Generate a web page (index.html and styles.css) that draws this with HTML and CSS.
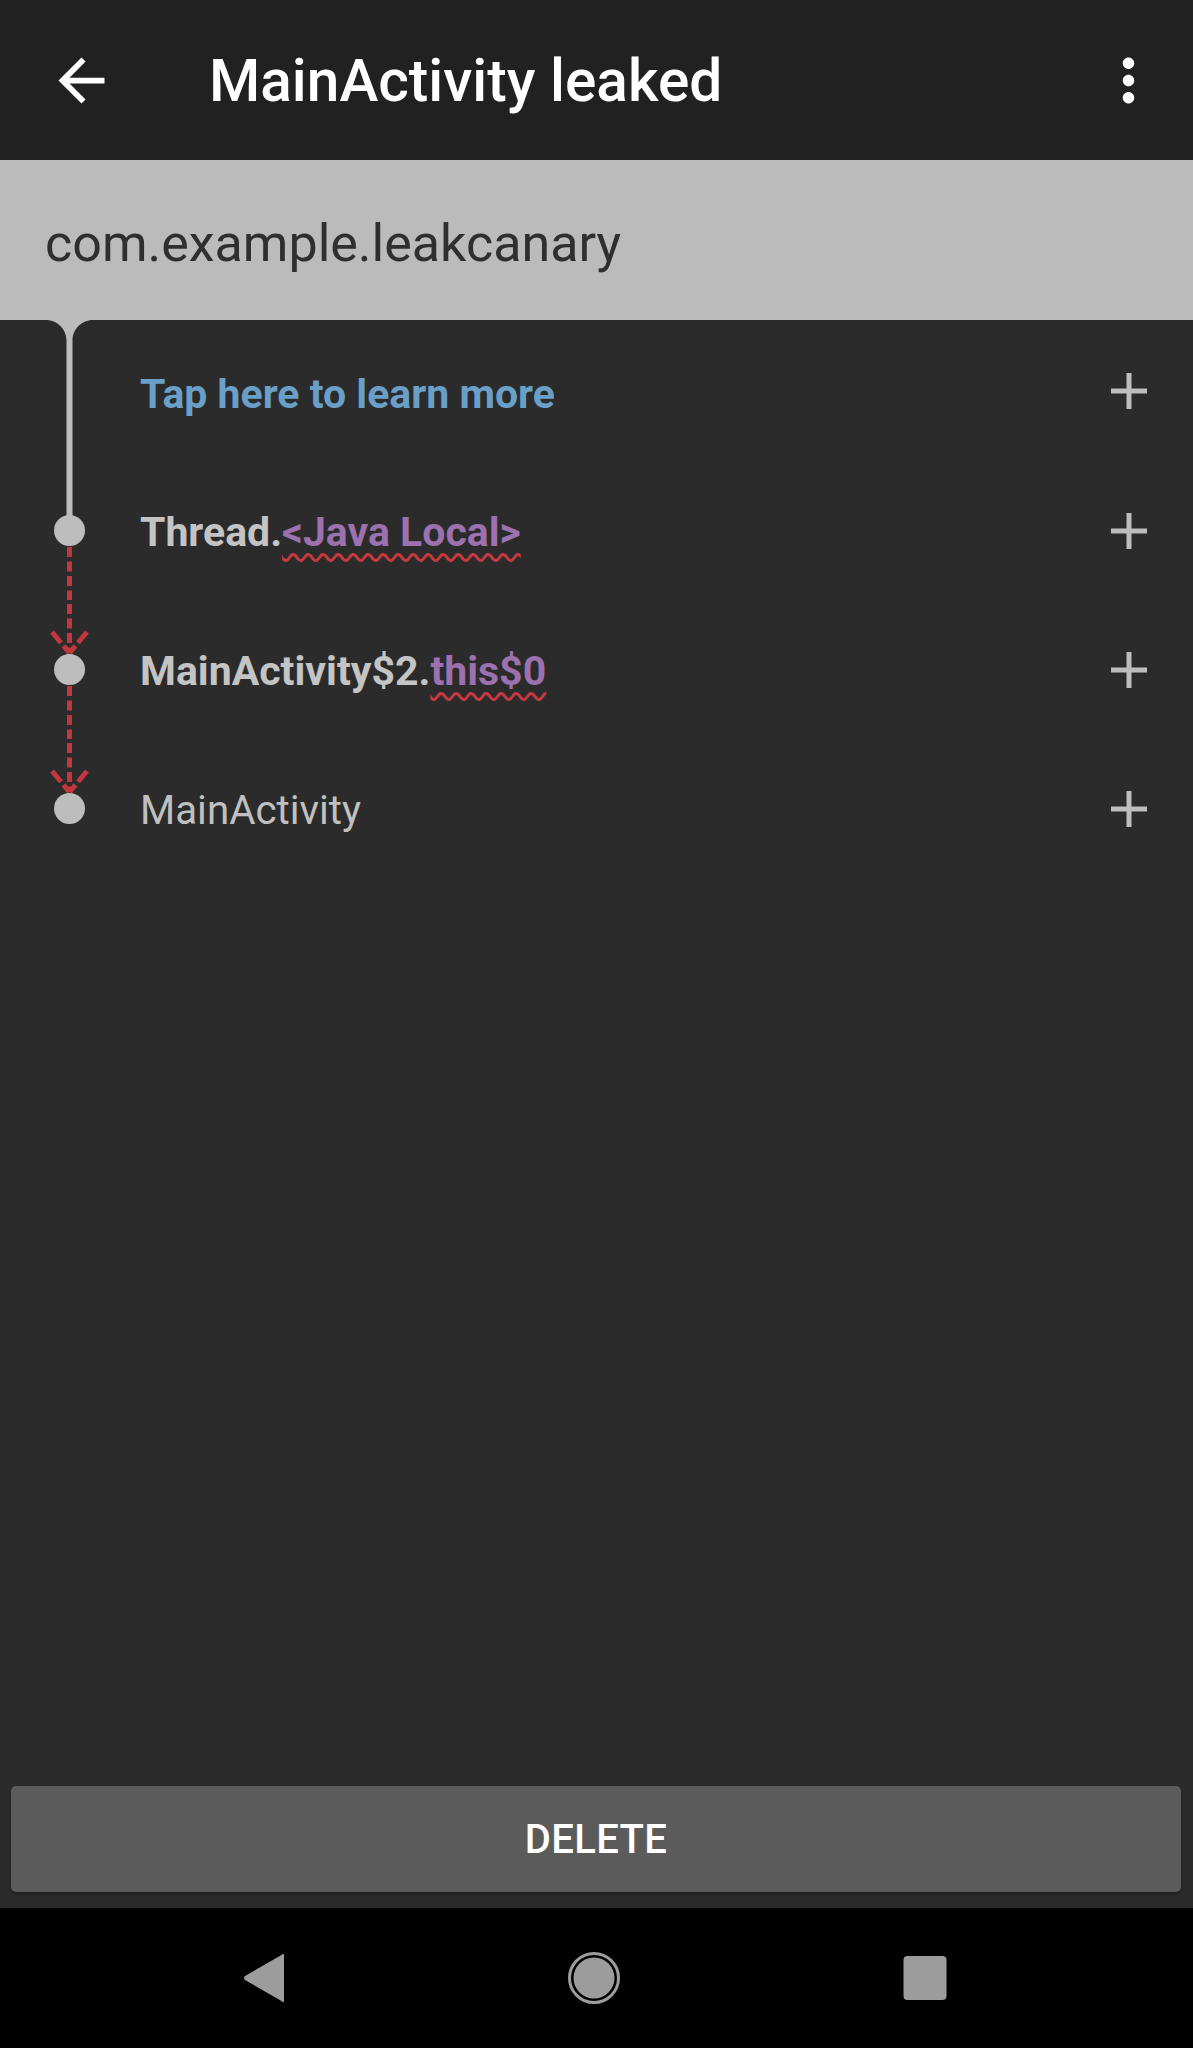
FILE: index.html
```html
<!DOCTYPE html>
<html>
<head>
<meta charset="utf-8">
<link rel="stylesheet" href="styles.css">
</head>
<body>
<div class="screen">
  <div class="toolbar">
    <svg class="tb-back" width="69" height="69" viewBox="0 0 24 24"><path fill="#fff" d="M20 11H7.83l5.59-5.59L12 4l-8 8 8 8 1.41-1.41L7.83 13H20v-2z"/></svg>
    <div class="tb-title">MainActivity leaked</div>
    <svg class="tb-more" width="69" height="69" viewBox="0 0 24 24"><path fill="#fff" d="M12 8c1.1 0 2-.9 2-2s-.9-2-2-2-2 .9-2 2 .9 2 2 2zm0 2c-1.1 0-2 .9-2 2s.9 2 2 2 2-.9 2-2-.9-2-2-2zm0 6c-1.1 0-2 .9-2 2s.9 2 2 2 2-.9 2-2-.9-2-2-2z"/></svg>
  </div>
  <div class="header">com.example.leakcanary</div>
  <div class="tree">
    <div class="row row-first">
      <svg class="gutter" width="139" height="141" viewBox="0 0 139 141">
        <path fill="#bcbcbc" d="M46,0 C57.3,0 66.5,9.2 66.5,20.5 V141 H72.5 V20.5 C72.5,9.2 81.7,0 93,0 Z"/>
      </svg>
      <div class="label link">Tap here to learn more</div>
      <svg class="plus" width="36" height="36" viewBox="0 0 36 36"><path d="M18 0V36M0 18H36" stroke="#bdbdbd" stroke-width="5"/></svg>
    </div>
    <div class="row">
      <svg class="gutter" width="139" height="139" viewBox="0 0 139 139">
        <rect x="66.5" y="0" width="6" height="70" fill="#bcbcbc"/>
        <line x1="69.5" y1="86" x2="69.5" y2="139" stroke="#c3383e" stroke-width="5" stroke-dasharray="10 4.5"/>
        <circle cx="69.5" cy="69.5" r="15.5" fill="#bdbdbd"/>
      </svg>
      <div class="label"><span class="strong">Thread.</span><span class="ref">&lt;Java Local&gt;</span></div>
      <svg class="plus" width="36" height="36" viewBox="0 0 36 36"><path d="M18 0V36M0 18H36" stroke="#bdbdbd" stroke-width="5"/></svg>
    </div>
    <div class="row">
      <svg class="gutter" width="139" height="139" viewBox="0 0 139 139">
        <line x1="69.5" y1="4" x2="69.5" y2="53" stroke="#c3383e" stroke-width="5" stroke-dasharray="10 4.5"/>
        <line x1="52" y1="32" x2="69.5" y2="53" stroke="#c3383e" stroke-width="5" stroke-dasharray="14 4"/>
        <line x1="87" y1="32" x2="69.5" y2="53" stroke="#c3383e" stroke-width="5" stroke-dasharray="14 4"/>
        <line x1="69.5" y1="86" x2="69.5" y2="139" stroke="#c3383e" stroke-width="5" stroke-dasharray="10 4.5"/>
        <circle cx="69.5" cy="69.5" r="15.5" fill="#bdbdbd"/>
      </svg>
      <div class="label"><span class="strong">MainActivity$2.</span><span class="ref">this$0</span></div>
      <svg class="plus" width="36" height="36" viewBox="0 0 36 36"><path d="M18 0V36M0 18H36" stroke="#bdbdbd" stroke-width="5"/></svg>
    </div>
    <div class="row">
      <svg class="gutter" width="139" height="139" viewBox="0 0 139 139">
        <line x1="69.5" y1="4" x2="69.5" y2="53" stroke="#c3383e" stroke-width="5" stroke-dasharray="10 4.5"/>
        <line x1="52" y1="32" x2="69.5" y2="53" stroke="#c3383e" stroke-width="5" stroke-dasharray="14 4"/>
        <line x1="87" y1="32" x2="69.5" y2="53" stroke="#c3383e" stroke-width="5" stroke-dasharray="14 4"/>
        <circle cx="69.5" cy="69.5" r="15.5" fill="#bdbdbd"/>
      </svg>
      <div class="label plain">MainActivity</div>
      <svg class="plus" width="36" height="36" viewBox="0 0 36 36"><path d="M18 0V36M0 18H36" stroke="#bdbdbd" stroke-width="5"/></svg>
    </div>
  </div>
  <div class="actions">
    <div class="btn">DELETE</div>
  </div>
  <div class="navbar">
    <svg width="60" height="60" viewBox="0 0 60 60"><path fill="#9c9c9c" d="M51,8 L51,52 Q51,56 48.5,53 L12,32 Q10,30 12,28 L48.5,7 Q51,4 51,8 Z"/></svg>
    <svg width="60" height="60" viewBox="0 0 60 60"><circle cx="30" cy="30" r="24.5" fill="none" stroke="#9c9c9c" stroke-width="3"/><circle cx="30" cy="30" r="20.5" fill="#9c9c9c"/></svg>
    <svg width="60" height="60" viewBox="0 0 60 60"><rect x="8.5" y="8" width="43" height="44" rx="4" fill="#9c9c9c"/></svg>
  </div>
</div>
</body>
</html>
```

FILE: styles.css
```css
html, body {
  margin: 0;
  padding: 0;
  background: #2b2b2b;
}

.screen {
  width: 1193px;
  height: 2048px;
  display: flex;
  flex-direction: column;
  font-family: Roboto, "Noto Sans", sans-serif;
  background: #2b2b2b;
  overflow: hidden;
}

.toolbar {
  height: 160px;
  flex: 0 0 160px;
  background: #212121;
  display: flex;
  align-items: center;
}

.tb-back {
  display: block;
  margin-left: 47px;
  flex: none;
}

.tb-title {
  margin-left: 93px;
  padding-top: 2px;
  color: #ffffff;
  font-size: 58.6px;
  font-weight: 500;
  line-height: 1;
}

.tb-more {
  display: block;
  margin-left: auto;
  margin-right: 30px;
  flex: none;
}

.header {
  height: 160px;
  flex: 0 0 160px;
  background: #bbbbbb;
  color: #2f2f2f;
  font-size: 52px;
  display: flex;
  align-items: center;
  padding-left: 45px;
  padding-top: 6px;
  box-sizing: border-box;
}

.tree {
  flex: 1;
  display: flex;
  flex-direction: column;
}

.row {
  height: 139px;
  display: grid;
  grid-template-columns: 139px 1fr 36px;
  align-items: center;
  padding-right: 46px;
}

.row-first {
  height: 141px;
}

.gutter {
  display: block;
  align-self: stretch;
}

.plus {
  display: block;
}

.label {
  font-size: 41px;
  font-weight: 700;
  color: #c4c4c4;
  padding-left: 1px;
  padding-top: 3px;
  white-space: nowrap;
}

.label.link {
  color: #6a9fc8;
  padding-top: 6px;
}

.label.plain {
  font-size: 40.3px;
  font-weight: 400;
  color: #c0c0c0;
  padding-top: 4px;
}

.ref {
  color: #9c71ae;
  text-decoration: underline wavy #c8383f;
  text-decoration-thickness: 2.8px;
  text-underline-offset: 7px;
}

.actions {
  padding: 0 12px 16px 11px;
}

.btn {
  height: 106px;
  background: #5b5b5c;
  border-radius: 5px;
  box-shadow: 0 2px 3px rgba(0, 0, 0, 0.35);
  color: #ffffff;
  font-size: 40px;
  font-weight: 500;
  letter-spacing: 0.4px;
  display: flex;
  align-items: center;
  justify-content: center;
}

.navbar {
  height: 140px;
  flex: 0 0 140px;
  background: #000000;
  display: flex;
  align-items: center;
  padding-left: 233px;
  gap: 271px;
}

.navbar svg {
  display: block;
}
```
